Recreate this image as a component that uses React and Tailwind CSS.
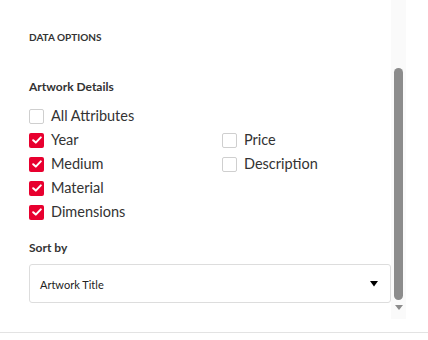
import React from 'react';

const LEFT = [
  { label: 'Year', checked: true },
  { label: 'Medium', checked: true },
  { label: 'Material', checked: true },
  { label: 'Dimensions', checked: true },
];
const RIGHT = [
  { label: 'Price', checked: false },
  { label: 'Description', checked: false },
];

function Check({ label, checked }) {
  return (
    <label className="flex items-center h-6 gap-[7px] text-[14.5px] text-[#333] cursor-pointer">
      {checked ? (
        <span className="w-[15px] h-[15px] rounded-[2px] bg-[#e8002f] flex items-center justify-center">
          <svg width="10" height="8" viewBox="0 0 10 8">
            <path d="M1.2 4.2 L3.8 6.6 L8.8 1.4" fill="none" stroke="#fff" strokeWidth="2" strokeLinecap="round" strokeLinejoin="round" />
          </svg>
        </span>
      ) : (
        <span className="w-[15px] h-[15px] rounded-[2px] border border-[#cfcfcf] bg-white" />
      )}
      <span>{label}</span>
    </label>
  );
}

export default function App() {
  return (
    <div className="w-[428px] h-[340px] bg-white overflow-hidden" style={{ fontFamily: 'Lato, "Open Sans", sans-serif' }}>
      <div className="flex h-[319px]">
        {/* scrolling panel */}
        <div className="w-[391px] pl-[29px] pt-[30px]">
          <h3 className="text-[10px] leading-[14px] font-bold text-[#333] uppercase">Data Options</h3>

          <h4 className="mt-[35px] text-[12px] leading-[16px] font-bold text-[#333]">Artwork Details</h4>

          <div className="mt-[9px] grid grid-cols-[193px_1fr]">
            <div className="col-span-2">
              <Check label="All Attributes" checked={false} />
            </div>
            <div>
              {LEFT.map((o) => <Check key={o.label} {...o} />)}
            </div>
            <div>
              {RIGHT.map((o) => <Check key={o.label} {...o} />)}
            </div>
          </div>

          <h4 className="mt-[16px] text-[12px] leading-[16px] font-bold text-[#333]">Sort by</h4>

          <div className="mt-[8px] w-[362px] h-[39px] border border-[#dddddd] rounded-[3px] flex items-center justify-between pl-[10px] pr-[12px]">
            <span className="pt-[3px] text-[11px] text-[#222]">Artwork Title</span>
            <svg width="8" height="6" viewBox="0 0 8 6">
              <path d="M0 0 H8 L4 5.5 Z" fill="#000" />
            </svg>
          </div>
        </div>

        {/* scrollbar */}
        <div className="w-[15px] bg-[#fafafa] flex flex-col items-center">
          <div className="mt-[68px] w-[9px] h-[232px] rounded-full bg-[#8c8c8c]" />
          <svg className="mt-[5px]" width="8" height="5" viewBox="0 0 8 5">
            <path d="M0 0 H8 L4 5 Z" fill="#8c8c8c" />
          </svg>
        </div>
      </div>

      <div className="mt-[13px] border-t border-[#e3e3e3]" />
    </div>
  );
}
